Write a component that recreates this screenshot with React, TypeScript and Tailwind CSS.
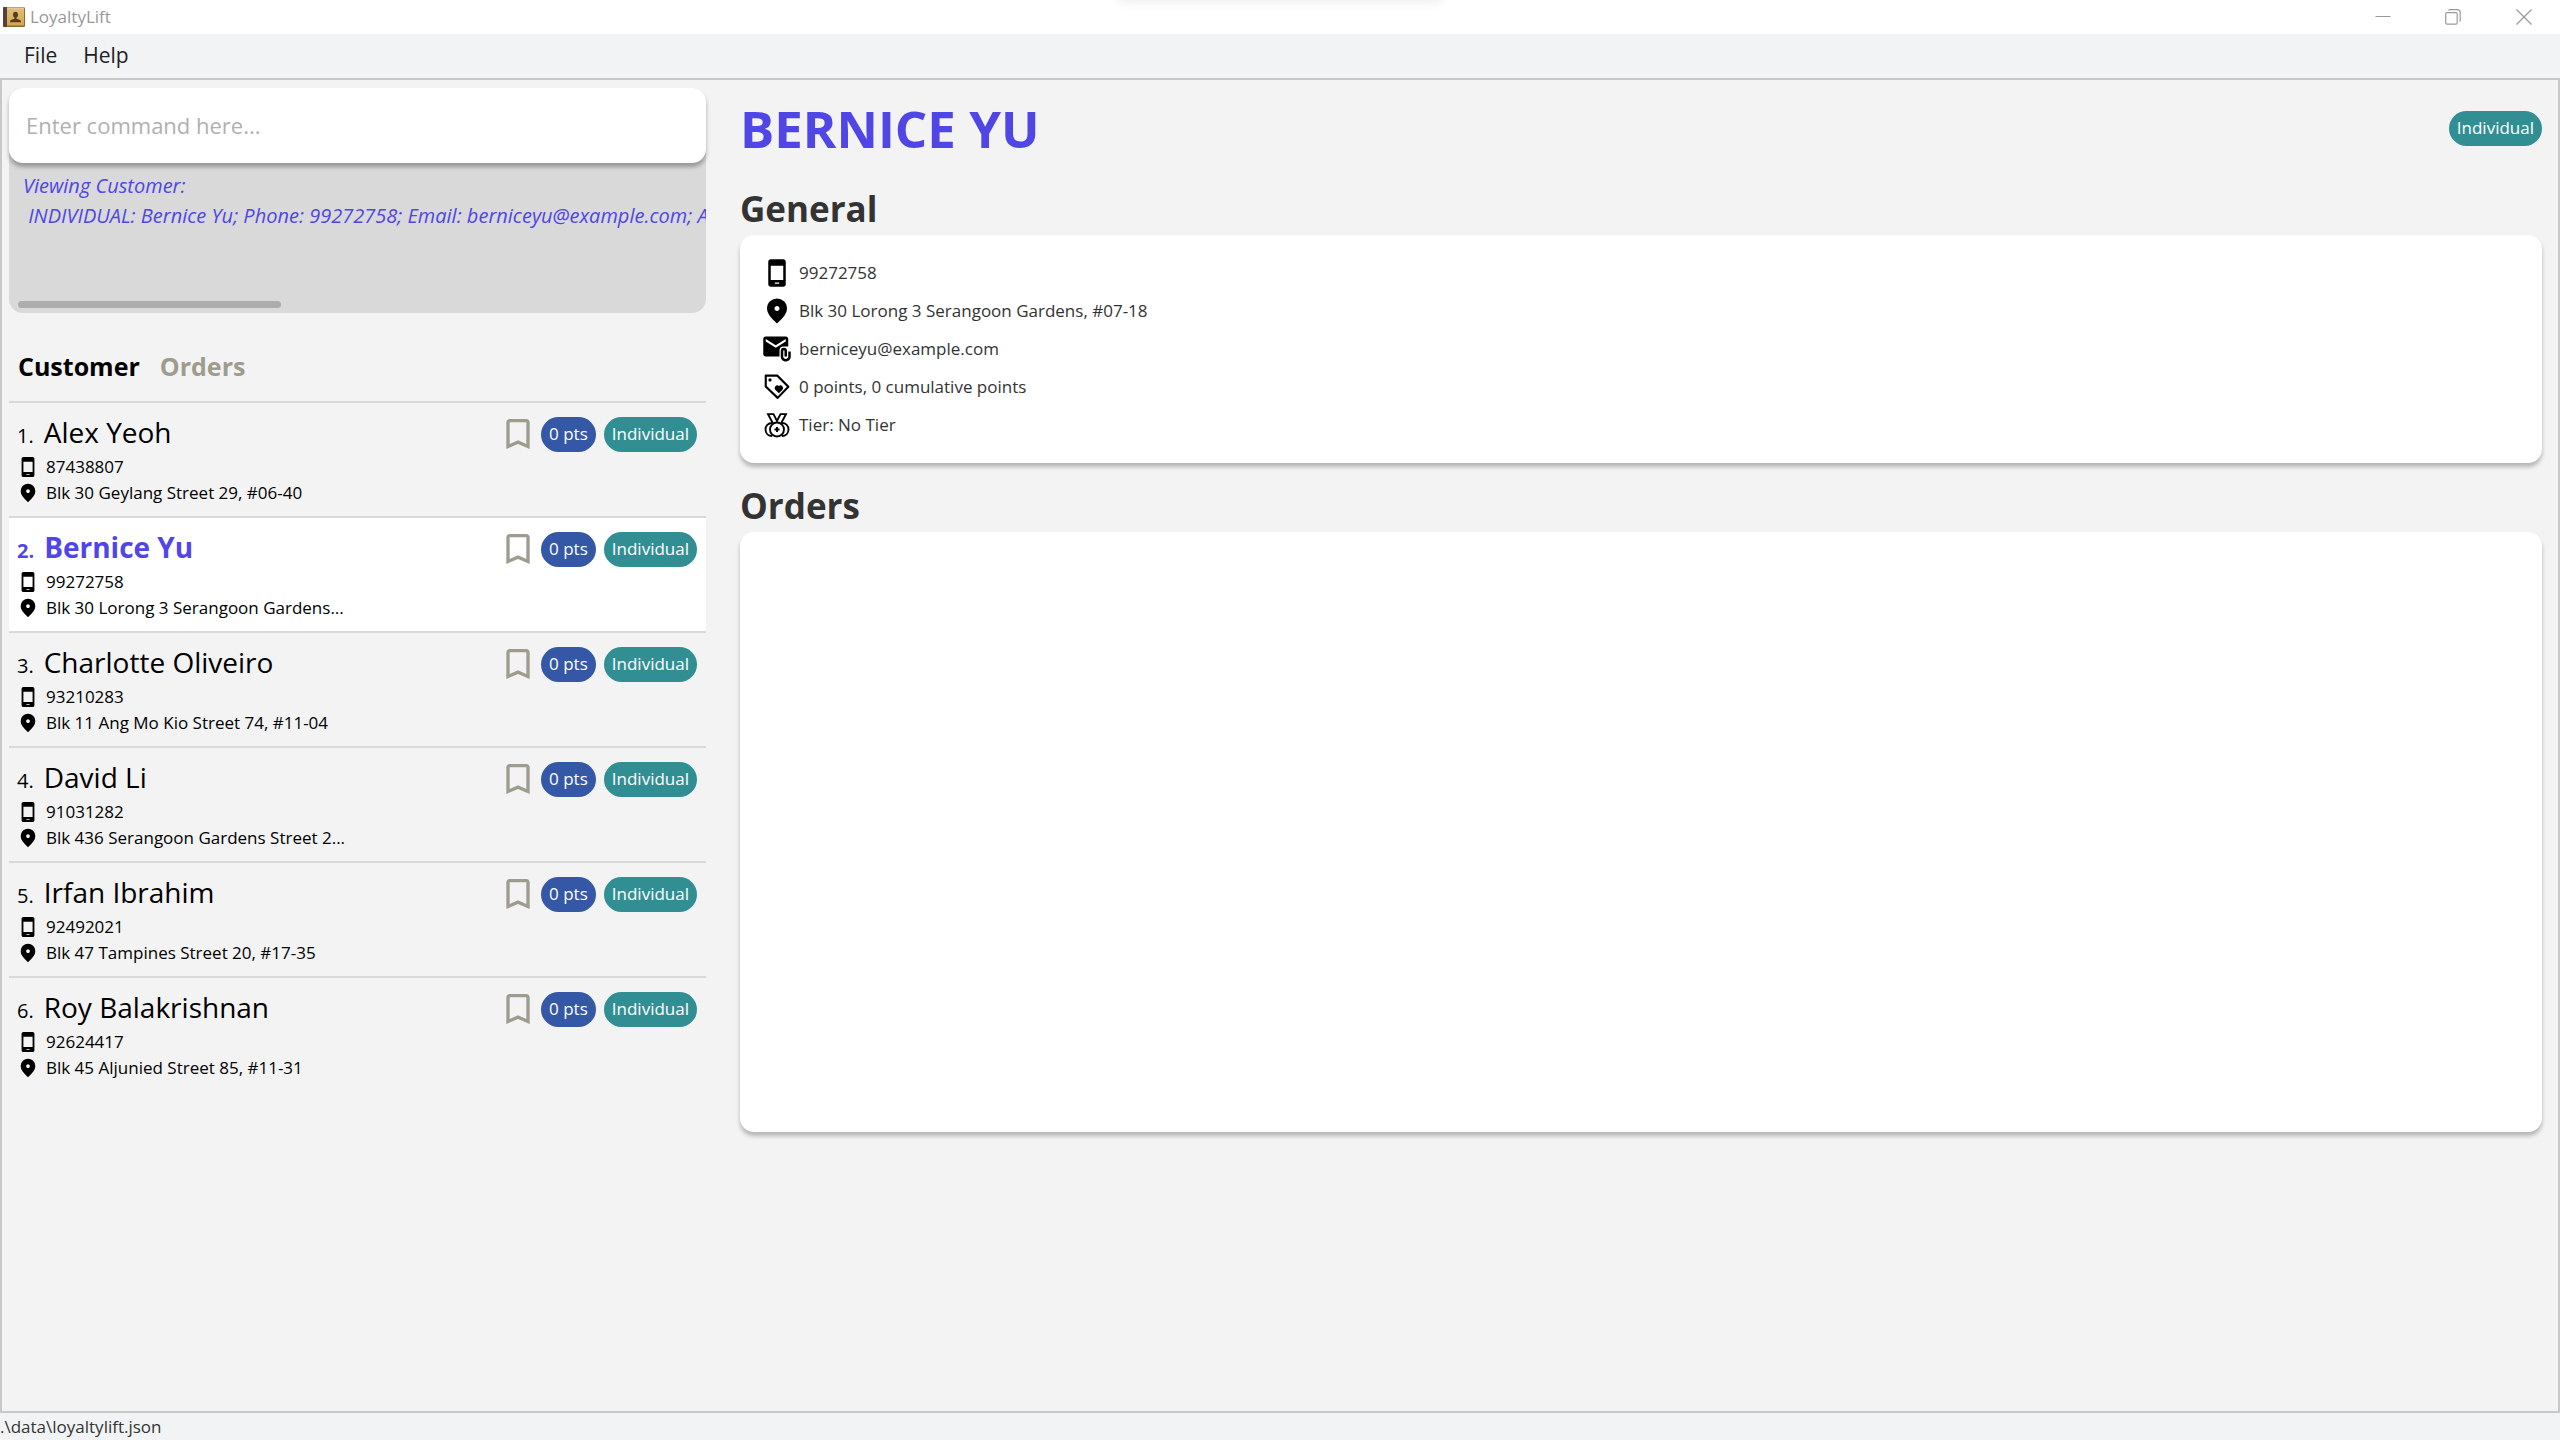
import React, { useState } from "react";
import { MdAttachEmail, MdBookmarkBorder } from "react-icons/md";

type Customer = { name: string; phone: string; address: string };

const customers: Customer[] = [
  { name: "Alex Yeoh", phone: "87438807", address: "Blk 30 Geylang Street 29, #06-40" },
  { name: "Bernice Yu", phone: "99272758", address: "Blk 30 Lorong 3 Serangoon Gardens..." },
  { name: "Charlotte Oliveiro", phone: "93210283", address: "Blk 11 Ang Mo Kio Street 74, #11-04" },
  { name: "David Li", phone: "91031282", address: "Blk 436 Serangoon Gardens Street 2..." },
  { name: "Irfan Ibrahim", phone: "92492021", address: "Blk 47 Tampines Street 20, #17-35" },
  { name: "Roy Balakrishnan", phone: "92624417", address: "Blk 45 Aljunied Street 85, #11-31" },
];

const selectedIndex = 1;

const resultText =
  "Viewing Customer:\n INDIVIDUAL: Bernice Yu; Phone: 99272758; Email: berniceyu@example.com; Address: Blk 30 Lorong 3 Serangoon Gardens, #07-18; Points: 0";

type IconProps = { className: string };

function PhoneIcon({ className }: IconProps) {
  return (
    <svg viewBox="0 0 960 960" className={className} fill="currentColor" fillRule="evenodd" aria-hidden="true">
      <path d="M280 920q-33 0-56.5-23.5T200 840V120q0-33 23.5-56.5T280 40h400q33 0 56.500 23.500T760 120v720q0 33-23.500 56.500T680 920H280Zm0-220h400V250H280v450Zm130 120h140v-40H410v40Z" />
    </svg>
  );
}

function PinIcon({ className }: IconProps) {
  return (
    <svg viewBox="0 0 960 960" className={className} fill="currentColor" fillRule="evenodd" aria-hidden="true">
      <path d="M480 880Q319 743 239.500 625.500T160 408q0-150 96.500-239T480 80t223.500 89T800 408q0 100-79.500 217.500T480 880Zm0-400q33 0 56.500-23.500T560 400t-23.500-56.500T480 320t-56.500 23.500T400 400t23.500 56.500T480 480Z" />
    </svg>
  );
}

function LoyaltyTagIcon({ className }: IconProps) {
  return (
    <svg viewBox="0 0 24 24" className={className} fill="none" aria-hidden="true">
      <path d="M3 2.900h9.200l8.900 8.900-8.600 8.900L3 11.600Z" stroke="currentColor" strokeWidth="1.700" strokeLinejoin="round" />
      <circle cx="6.400" cy="6.300" r="1.300" fill="currentColor" />
      <path
        d="M13.500 17l-2.900-2.900a2.100 2.100 0 0 1 2.900-3 2.100 2.100 0 0 1 2.900 3Z"
        fill="currentColor"
      />
    </svg>
  );
}

function MedalIcon({ className }: IconProps) {
  return (
    <svg viewBox="0 0 24 24" className={className} fill="none" stroke="currentColor" strokeWidth="1.500" aria-hidden="true">
      <path d="M8.600 10.400 4.800 3.300h4.400L12 8.800l2.800-5.500h4.400l-3.800 7.100" />
      <circle cx="12" cy="15.600" r="5.600" />
      <path d="M8.200 10.400C4.800 10.400 2.800 12.800 2.800 15.600s2 5.200 5.400 5.200M15.800 10.400c3.400 0 5.400 2.400 5.400 5.200s-2 5.200-5.400 5.200" />
      <path d="M12 13.600v4M10 15.600h4" />
    </svg>
  );
}

function AppLogo({ className }: IconProps) {
  return (
    <svg viewBox="0 0 22 20" className={className} aria-hidden="true">
      <defs>
        <linearGradient id="cover" x1="0" y1="0" x2="0" y2="1">
          <stop offset="0" stopColor="#e3bd7c" />
          <stop offset="1" stopColor="#d9a44c" />
        </linearGradient>
      </defs>
      <rect x="0" y="0" width="22" height="20" rx="1.500" fill="#8f6a35" />
      <rect x="0" y="0" width="4" height="20" rx="1" fill="#54423a" />
      <rect x="4" y="1.500" width="17" height="17" fill="url(#cover)" />
      <rect x="4" y="0.500" width="17" height="1.200" fill="#f0dfbd" />
      <ellipse cx="12.500" cy="7.800" rx="2.500" ry="3" fill="#54401f" />
      <path d="M11.500 10h2v1.800l3.600 1.200q.9.400.9 2.200H7q0-1.800.9-2.200l3.600-1.200Z" fill="#54401f" />
    </svg>
  );
}

function TypeBadge() {
  return (
    <span className="flex h-[35px] items-center rounded-full bg-[#318f94] px-2 text-[17px] text-white">Individual</span>
  );
}

function TitleBar() {
  return (
    <header className="relative flex h-[34px] items-center overflow-hidden bg-white pl-[3px] text-[#999999]">
      <div className="absolute -top-4 left-1/2 h-4 w-[320px] -translate-x-1/2 shadow-[0_0_12px_2px_rgba(0,0,0,0.07)]" />
      <AppLogo className="h-5 w-[22px]" />
      <span className="ml-[5px] text-[17px]">LoyaltyLift</span>
      <div className="ml-auto flex h-full items-center">
        <button type="button" aria-label="Minimize" className="flex h-full w-[70px] items-center justify-center">
          <svg viewBox="0 0 16 16" className="size-4" stroke="currentColor" aria-hidden="true">
            <path d="M0.500 7.500h15" />
          </svg>
        </button>
        <button type="button" aria-label="Restore" className="flex h-full w-[70px] items-center justify-center">
          <svg viewBox="0 0 16 16" className="size-4" fill="none" stroke="currentColor" strokeWidth="1.200" aria-hidden="true">
            <rect x="0.700" y="3.700" width="11.500" height="11.500" rx="1.500" />
            <path d="M3.500 1.400Q4 .7 5 .7h7.200q3 0 3 3V11q0 1-.7 1.500" />
          </svg>
        </button>
        <button type="button" aria-label="Close" className="flex h-full w-[72px] items-center justify-center">
          <svg viewBox="0 0 16 16" className="size-4" stroke="currentColor" strokeWidth="1.200" aria-hidden="true">
            <path d="M.5.500l15 15M15.500.500l-15 15" />
          </svg>
        </button>
      </div>
    </header>
  );
}

function CustomerRow({ customer, index }: { customer: Customer; index: number }) {
  const selected = index === selectedIndex;
  return (
    <li
      aria-current={selected}
      className={
        selected
          ? "flex h-[115px] items-start border-t-2 border-[#d9d9d9] bg-white pt-[11px] pr-[9px] pl-2"
          : "flex h-[115px] items-start border-t-2 border-[#d9d9d9] pt-[11px] pr-[9px] pl-2"
      }
    >
      <div className="min-w-0 flex-1">
        <h3
          className={
            selected
              ? "flex items-baseline gap-[10px] leading-9 font-bold text-[#4f46e5]"
              : "flex items-baseline gap-[10px] leading-9"
          }
        >
          <span className="text-[20px]">{index + 1}.</span>
          <span className="text-[28px]">{customer.name}</span>
        </h3>
        <p className="flex h-[26px] items-center gap-[7px] text-[17px]">
          <PhoneIcon className="size-[22px] shrink-0" />
          {customer.phone}
        </p>
        <p className="flex h-[26px] items-center gap-[7px] text-[17px]">
          <PinIcon className="size-[22px] shrink-0" />
          {customer.address}
        </p>
      </div>
      <div className="flex shrink-0 items-center gap-2">
        <MdBookmarkBorder className="-mr-2 size-10 text-[#9e9b8f]" aria-hidden="true" />
        <span className="ml-[3px] flex h-[35px] items-center rounded-full bg-[#3457a6] px-2 text-[17px] text-white">0 pts</span>
        <TypeBadge />
      </div>
    </li>
  );
}

function Sidebar() {
  const [command, setCommand] = useState("");
  return (
    <section className="min-w-0">
      <div className="rounded-[14px] bg-[#d9d9d9]">
        <input
          type="text"
          aria-label="Command"
          placeholder="Enter command here..."
          value={command}
          onChange={(event) => setCommand(event.target.value)}
          className="block h-[75px] w-full rounded-[14px] bg-white px-[17px] pb-[2px] text-[22px] shadow-[0_4px_4px_rgba(0,0,0,0.3)] outline-none placeholder:text-[#b0b0b0]"
        />
        <textarea
          readOnly
          wrap="off"
          aria-label="Result"
          value={resultText}
          className="mt-2 block h-[130px] w-full resize-none overflow-hidden pr-[1px] pl-[14px] text-[20px] leading-[30px] text-[#4f46e5] italic outline-none"
        />
        <div className="pb-[5px] pl-[9px]">
          <div className="h-[7px] w-[263px] rounded-full bg-[#adadad]" />
        </div>
      </div>
      <nav className="mt-[35px] flex gap-5 pl-[9px] text-[25px] leading-[36px] font-bold">
        <button type="button" className="text-black">
          Customer
        </button>
        <button type="button" className="text-[#9e9b8f]">
          Orders
        </button>
      </nav>
      <ol className="mt-[17px] text-black">
        {customers.map((customer, index) => (
          <CustomerRow key={customer.name} customer={customer} index={index} />
        ))}
      </ol>
    </section>
  );
}

function DetailRow({ icon, children }: { icon: React.ReactNode; children: React.ReactNode }) {
  return (
    <li className="flex h-[38px] items-center gap-[7px]">
      {icon}
      <span>{children}</span>
    </li>
  );
}

function CustomerDetail() {
  const iconClass = "size-[30px] shrink-0 text-black";
  return (
    <section className="min-w-0 text-[#333333]">
      <div className="mt-1 flex h-[72px] items-center justify-between">
        <h1 className="text-[51px] leading-[72px] font-bold text-[#4f46e5]">BERNICE YU</h1>
        <TypeBadge />
      </div>
      <h2 className="mt-5 text-[35px] leading-[50px] font-bold">General</h2>
      <ul className="mt-px rounded-[14px] bg-white px-[22px] pt-[19px] pb-[19px] text-[17px] shadow-[0_4px_4px_rgba(0,0,0,0.25)]">
        <DetailRow icon={<PhoneIcon className={iconClass} />}>99272758</DetailRow>
        <DetailRow icon={<PinIcon className={iconClass} />}>Blk 30 Lorong 3 Serangoon Gardens, #07-18</DetailRow>
        <DetailRow icon={<MdAttachEmail className={iconClass} aria-hidden="true" />}>berniceyu@example.com</DetailRow>
        <DetailRow icon={<LoyaltyTagIcon className={iconClass} />}>0 points, 0 cumulative points</DetailRow>
        <DetailRow icon={<MedalIcon className={iconClass} />}>Tier: No Tier</DetailRow>
      </ul>
      <h2 className="mt-[18px] text-[35px] leading-[50px] font-bold">Orders</h2>
      <div className="mt-px h-[600px] rounded-[14px] bg-white shadow-[0_4px_4px_rgba(0,0,0,0.25)]" />
    </section>
  );
}

export default function App() {
  return (
    <div className="flex min-h-screen flex-col bg-[#f3f3f3] font-['Open_Sans','Noto_Sans',sans-serif]">
      <TitleBar />
      <nav className="flex h-11 items-center gap-[26px] bg-[#f2f3f5] pl-6 text-[21px] text-[#222222]">
        <button type="button">File</button>
        <button type="button">Help</button>
      </nav>
      <main className="grid flex-1 grid-cols-[697fr_1802fr] gap-[34px] border-2 border-[#c8c8c8] pt-2 pr-4 pl-[7px]">
        <Sidebar />
        <CustomerDetail />
      </main>
      <footer className="h-[27px] bg-[#f2f3f5] text-[17px] leading-[27px] text-[#333333]">.\data\loyaltylift.json</footer>
    </div>
  );
}
